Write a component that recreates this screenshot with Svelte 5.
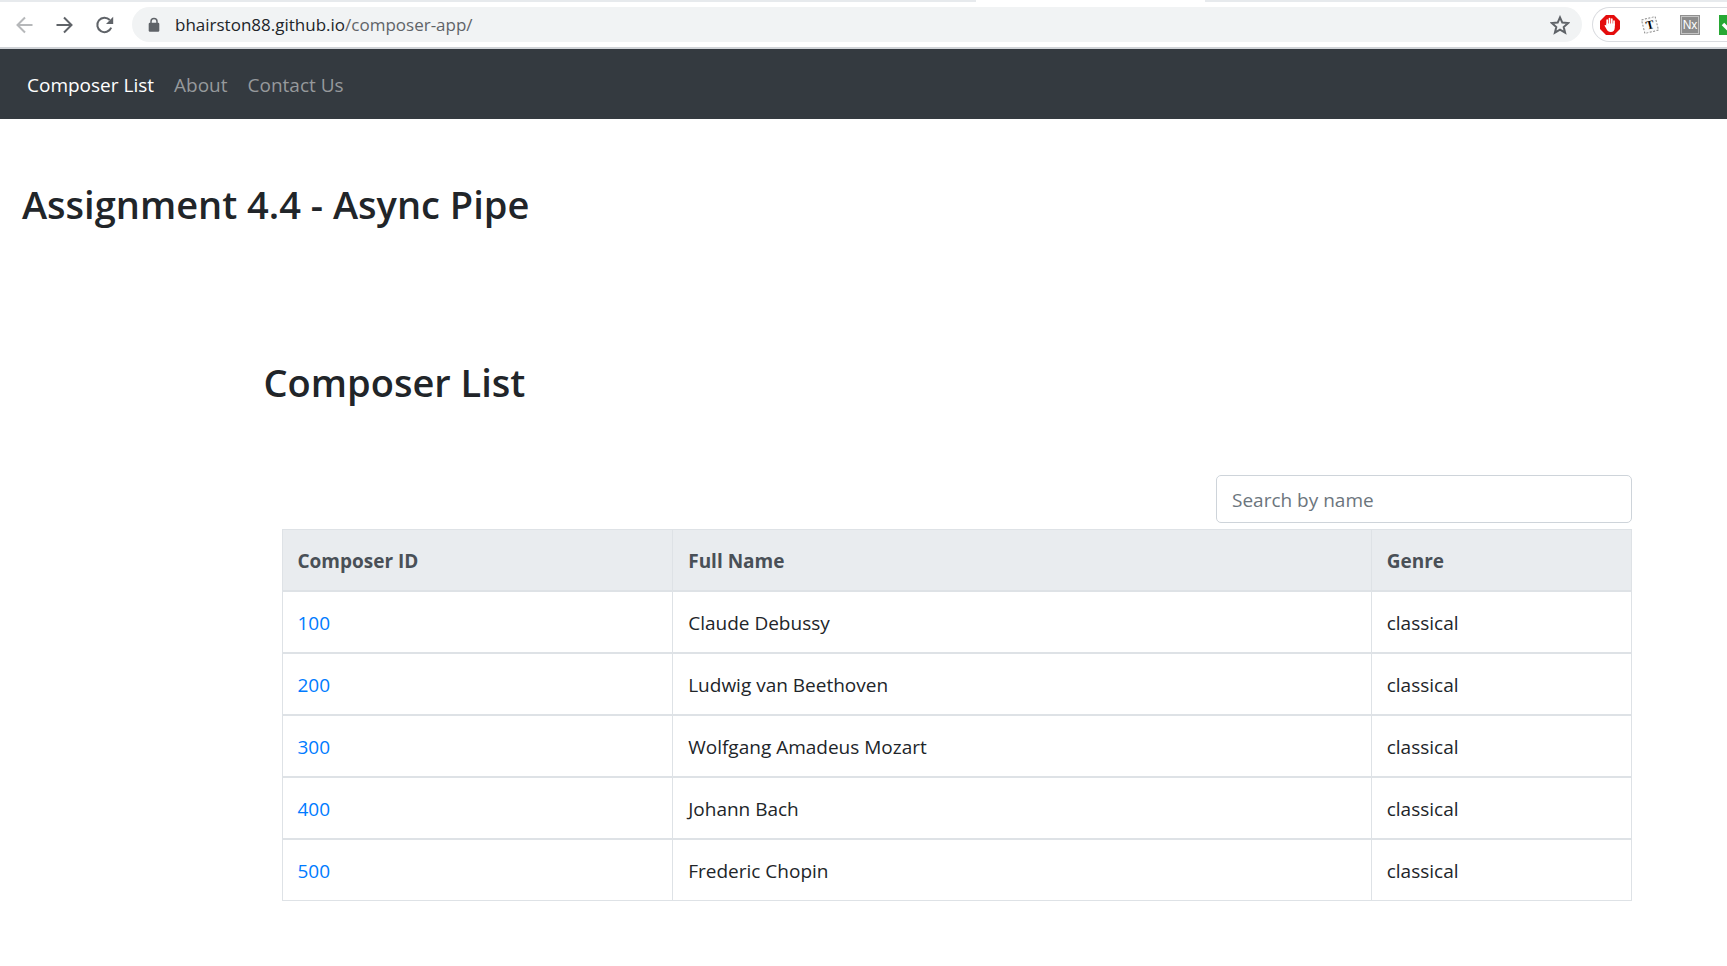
<script>
  const links = [
    { label: 'Composer List', active: true },
    { label: 'About', active: false },
    { label: 'Contact Us', active: false }
  ];

  const composers = [
    { id: 100, name: 'Claude Debussy', genre: 'classical' },
    { id: 200, name: 'Ludwig van Beethoven', genre: 'classical' },
    { id: 300, name: 'Wolfgang Amadeus Mozart', genre: 'classical' },
    { id: 400, name: 'Johann Bach', genre: 'classical' },
    { id: 500, name: 'Frederic Chopin', genre: 'classical' }
  ];

  let query = $state('');
  const shown = $derived(
    composers.filter((c) => c.name.toLowerCase().includes(query.toLowerCase()))
  );
</script>

<div class="strip"><div class="tab"></div></div>
<div class="toolbar">
  <div class="controls">
    <button class="tool faded" aria-label="Back">
      <svg class="line" width="20" height="20" viewBox="0 0 20 20"><path d="M17.5 10H3M10 2.5L2.5 10L10 17.5" /></svg>
    </button>
    <button class="tool" aria-label="Forward">
      <svg class="line" width="20" height="20" viewBox="0 0 20 20"><path d="M1.5 10H16M9 2.5L16.5 10L9 17.5" /></svg>
    </button>
    <button class="tool" aria-label="Reload">
      <svg class="line" width="20" height="20" viewBox="0 0 20 20">
        <path d="M16.2 12.6A7.2 7.2 0 1 1 14.8 5" />
        <path class="solid" d="M18.2 1.8V9H11Z" />
      </svg>
    </button>
  </div>
  <div class="address">
    <svg width="12" height="16" viewBox="0 0 12 16">
      <path d="M3 7V4.4a3 3 0 0 1 6 0V7" fill="none" stroke="#5f6368" stroke-width="1.5" />
      <rect x="0.7" y="5.8" width="10.6" height="9" rx="1.2" fill="#5f6368" />
    </svg>
    <span class="url">bhairston88.github.io<span class="path">/composer-app/</span></span>
    <button class="tool" aria-label="Bookmark this page">
      <svg class="line" width="20" height="20" viewBox="0 0 20 20">
        <path d="M10 2.4L12.3 7.6L18.2 8.1L13.7 12L15.1 17.7L10 14.6L4.9 17.7L6.3 12L1.8 8.1L7.7 7.6Z" />
      </svg>
    </button>
  </div>
  <div class="extensions">
    <button class="tool" aria-label="Ad blocker">
      <svg width="22" height="22" viewBox="0 0 22 22">
        <path d="M7 1H15L21 7V15L15 21H7L1 15V7Z" fill="#e40d0d" />
        <path d="M8.2 11V6.2M10.5 10V4.6M12.8 10V5.2M15 11V7.2" stroke="#fff" stroke-width="1.7" stroke-linecap="round" />
        <path d="M7.4 9.5H15.8V13.5C15.8 16.5 14 18 11.8 18C9.5 18 8.6 17 7.6 15.2L5.6 11.8C5.4 11 6.6 10.6 7.4 11.6Z" fill="#fff" />
      </svg>
    </button>
    <button class="tool" aria-label="Text tool">
      <svg width="22" height="22" viewBox="0 0 22 22">
        <g transform="rotate(-14 11 11)">
          <rect x="4" y="4" width="14" height="14" fill="#fafafa" stroke="#8a8a8a" stroke-width="1" stroke-dasharray="2 1.5" />
          <text x="11" y="15" text-anchor="middle" class="tee">T</text>
        </g>
      </svg>
    </button>
    <button class="tool" aria-label="Nx">
      <svg width="22" height="22" viewBox="0 0 22 22">
        <rect x="1.5" y="1.5" width="19" height="19" fill="#8c8c8c" stroke="#909090" stroke-width="1" />
        <rect x="2.5" y="2.5" width="17" height="17" fill="none" stroke="#c4c4c4" stroke-width="1" />
        <text x="11" y="15" text-anchor="middle" class="nx">Nx</text>
      </svg>
    </button>
    <button class="tool" aria-label="Checker">
      <svg width="22" height="22" viewBox="0 0 22 22">
        <rect x="0" y="1" width="21" height="20" fill="#27a834" />
        <path d="M4 10L8.5 14.5L17 6" fill="none" stroke="#fff" stroke-width="3.5" />
      </svg>
    </button>
  </div>
</div>

<nav>
  {#each links as link}
    <a href="#top" class:active={link.active}>{link.label}</a>
  {/each}
</nav>

<main>
  <h1>Assignment 4.4 - Async Pipe</h1>
  <section>
    <h2>Composer List</h2>
    <div class="list">
      <input type="text" placeholder="Search by name" aria-label="Search by name" bind:value={query} />
      <table>
        <thead>
          <tr><th class="id">Composer ID</th><th class="name">Full Name</th><th>Genre</th></tr>
        </thead>
        <tbody>
          {#each shown as composer}
            <tr>
              <td><a href="#top">{composer.id}</a></td>
              <td>{composer.name}</td>
              <td>{composer.genre}</td>
            </tr>
          {/each}
        </tbody>
      </table>
    </div>
  </section>
</main>

<style>
  :global(body) {
    margin: 0;
    background: #fff;
    color: #212529;
    font-family: 'Open Sans', 'Noto Sans', sans-serif;
    font-size: 19px;
    line-height: 30px;
    overflow-x: hidden;
  }
  * {
    box-sizing: border-box;
  }
  a {
    color: #007bff;
    text-decoration: none;
  }
  .strip {
    height: 2px;
    background: #e7eaed;
  }
  .tab {
    width: 13.3%;
    height: 2px;
    margin-left: 56.5%;
    background: #fff;
  }
  .toolbar {
    display: flex;
    align-items: center;
    height: 47px;
    border-bottom: 2px solid #d0d3d7;
    overflow: hidden;
  }
  .controls {
    display: flex;
    gap: 20px;
    padding: 0 17px 0 15px;
  }
  .tool {
    display: flex;
    flex: none;
    padding: 0;
    border: 0;
    background: none;
  }
  .line path {
    fill: none;
    stroke: #5f6368;
    stroke-width: 2;
  }
  .line path.solid {
    fill: #5f6368;
    stroke: none;
  }
  .faded {
    opacity: 0.45;
  }
  .address {
    display: flex;
    flex: 1;
    align-items: center;
    height: 35px;
    padding: 0 12px 0 16px;
    border-radius: 18px;
    background: #f1f3f4;
  }
  .url {
    flex: 1;
    margin-left: 15px;
    font-size: 17px;
  }
  .path {
    color: #5f6368;
  }
  .extensions {
    display: flex;
    flex: none;
    align-items: center;
    gap: 18px;
    width: 135px;
    height: 35px;
    margin-left: 10px;
    padding-left: 6px;
    border: 1px solid #dadce0;
    border-right: 0;
    border-radius: 18px 0 0 18px;
    overflow: hidden;
  }
  .tee {
    font: bold 12px 'Liberation Serif', serif;
  }
  .nx {
    fill: #fff;
    font: 12px 'Liberation Sans', sans-serif;
  }
  nav {
    display: flex;
    gap: 20px;
    padding: 21px 27px 19px;
    background: #343a40;
  }
  nav a {
    color: #96999c;
  }
  nav a.active {
    color: #fff;
  }
  main {
    padding: 61px 95px 60px 22px;
  }
  h1,
  h2 {
    margin: 0;
    font-size: 38px;
    font-weight: 600;
    line-height: 48px;
  }
  section {
    margin: 130px 0 0 15%;
  }
  .list {
    display: flex;
    flex-direction: column;
    gap: 6px;
    margin-top: 69px;
    padding-left: 18px;
  }
  input {
    align-self: flex-end;
    width: 416px;
    height: 48px;
    padding: 2px 15px 0;
    border: 1px solid #ced4da;
    border-radius: 5px;
    color: #495057;
    font: inherit;
  }
  input::placeholder {
    color: #6c757d;
    opacity: 1;
  }
  table {
    width: 100%;
    border: 1px solid #dee2e6;
    border-spacing: 0;
    table-layout: fixed;
  }
  th,
  td {
    height: 62px;
    padding: 2px 15px 0;
    border-bottom: 2px solid #dee2e6;
    text-align: left;
  }
  th + th,
  td + td {
    border-left: 1px solid #dee2e6;
  }
  tr:last-child td {
    height: 60px;
    border-bottom: 0;
  }
  th {
    background: #e9ecef;
    color: #495057;
  }
  tr:last-child th {
    border-bottom: 2px solid #dee2e6;
  }
  .id {
    width: 28.9%;
  }
  .name {
    width: 51.8%;
  }
</style>
